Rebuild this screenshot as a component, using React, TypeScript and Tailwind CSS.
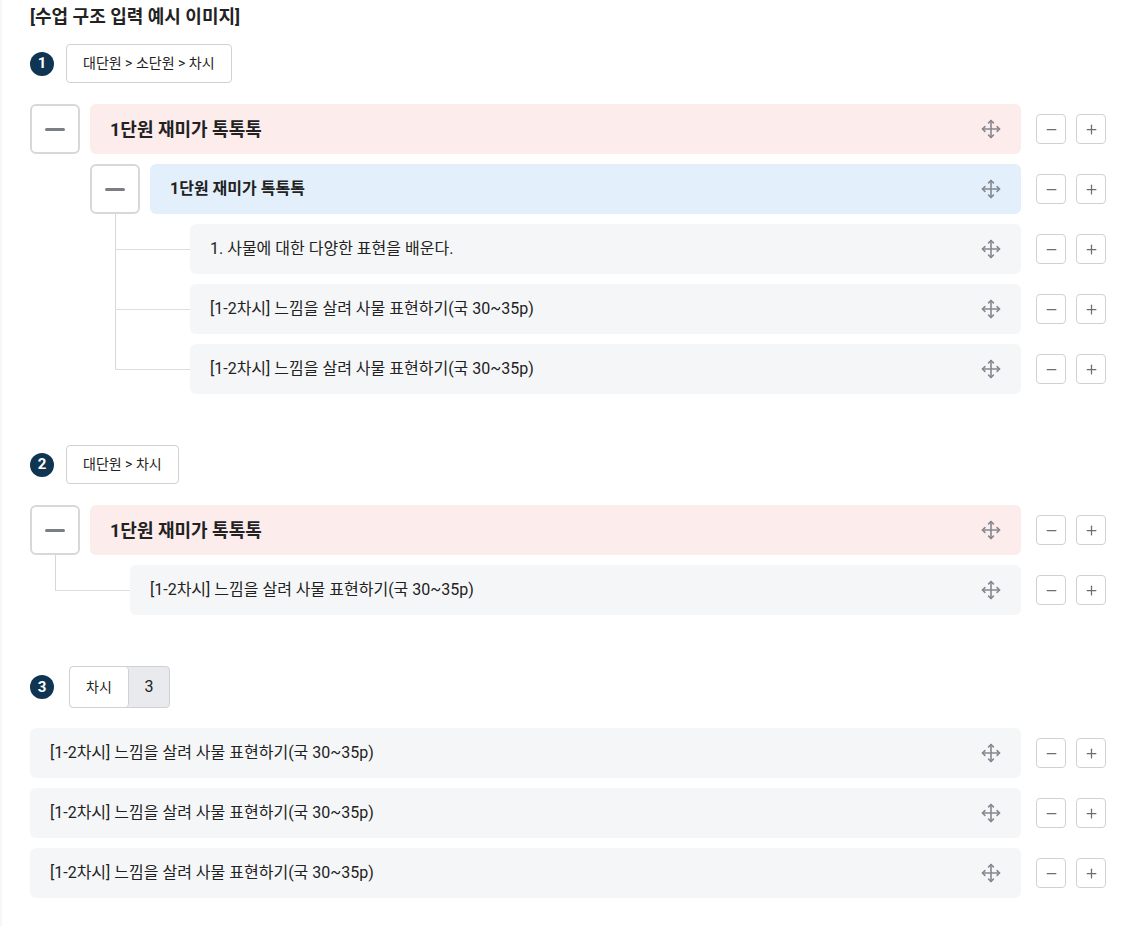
import { Minus, Plus } from 'lucide-react';
import type { ReactNode } from 'react';

type Tone = 'unit' | 'sub' | 'lesson';

const toneClass: Record<Tone, string> = {
  unit: 'bg-[#fdecec] text-[18px] font-bold pl-5',
  sub: 'bg-[#e3f0fb] text-[16px] font-bold pl-5',
  lesson: 'bg-[#f5f6f8] text-[16px] pl-5',
};

function MoveIcon() {
  return (
    <svg width="22" height="22" viewBox="0 0 22 22" fill="none" stroke="#85888e" strokeWidth="1.6" strokeLinecap="round" strokeLinejoin="round">
      <line x1="11" y1="2.5" x2="11" y2="19.5" />
      <line x1="2.5" y1="11" x2="19.5" y2="11" />
      <polyline points="8.6,4.9 11,2.5 13.4,4.9" />
      <polyline points="8.6,17.1 11,19.5 13.4,17.1" />
      <polyline points="4.9,8.6 2.5,11 4.9,13.4" />
      <polyline points="17.1,8.6 19.5,11 17.1,13.4" />
    </svg>
  );
}

function Bar({ tone, text }: { tone: Tone; text: string }) {
  return (
    <div className="flex flex-1 items-center h-[50px]">
      <div className={`flex flex-1 h-full items-center justify-between rounded-md pr-[19px] text-[#222] ${toneClass[tone]}`}>
        <span>{text}</span>
        <MoveIcon />
      </div>
      <div className="flex items-center gap-[10px] ml-[15px]">
        <button className="w-[30px] h-[30px] flex items-center justify-center rounded border border-[#cfd1d5] bg-white text-[#6b6e73]">
          <Minus size={15} strokeWidth={2} />
        </button>
        <button className="w-[30px] h-[30px] flex items-center justify-center rounded border border-[#cfd1d5] bg-white text-[#6b6e73]">
          <Plus size={15} strokeWidth={2} />
        </button>
      </div>
    </div>
  );
}

function Toggle() {
  return (
    <button className="w-[50px] h-[50px] shrink-0 flex items-center justify-center rounded-md border-2 border-[#d6d8dc] bg-white">
      <span className="block w-[20px] h-[3px] rounded-full bg-[#7b7e83]" />
    </button>
  );
}

// connector cell: vertical line at x=25 running up through the gap, elbow to the bar
function Branch({ width, last }: { width: string; last?: boolean }) {
  return (
    <div className={`relative h-[50px] shrink-0 ${width}`}>
      <span className={`absolute left-[25px] top-[-10px] w-px bg-[#d4d6da] ${last ? 'h-[35px]' : 'h-[60px]'}`} />
      <span className="absolute left-[25px] right-0 top-[25px] h-px bg-[#dcdee2]" />
    </div>
  );
}

function StepHead({ n, children }: { n: number; children: ReactNode }) {
  return (
    <div className="flex items-center gap-3">
      <span className="w-6 h-6 rounded-full bg-[#0f3553] text-white text-[15px] font-bold flex items-center justify-center">
        {n}
      </span>
      {children}
    </div>
  );
}

function Crumb({ text }: { text: string }) {
  return (
    <div className="h-[39px] px-4 flex items-center rounded border border-[#cfd1d5] bg-white text-[14px] text-[#222]">
      {text}
    </div>
  );
}

const LESSON = '[1-2차시] 느낌을 살려 사물 표현하기(국 30~35p)';

export default function App() {
  return (
    <div
      className="w-[1136px] min-h-[927px] bg-white pl-[28px] pr-[30px] pt-[5px] pb-8 border-l-2 border-[#f7f7f7]"
      style={{ fontFamily: 'Roboto, "Noto Sans CJK KR", "Noto Sans", sans-serif' }}
    >
      <h1 className="text-[18px] font-bold text-[#222] leading-[24px]">[수업 구조 입력 예시 이미지]</h1>

      {/* 1 */}
      <div className="mt-[15px]">
        <StepHead n={1}>
          <Crumb text="대단원 > 소단원 > 차시" />
        </StepHead>
        <div className="mt-[21px] flex flex-col gap-[10px]">
          <div className="flex gap-[10px]">
            <Toggle />
            <Bar tone="unit" text="1단원 재미가 톡톡톡" />
          </div>
          <div className="flex gap-[10px] pl-[60px]">
            <Toggle />
            <Bar tone="sub" text="1단원 재미가 톡톡톡" />
          </div>
          <div className="flex pl-[60px]">
            <Branch width="w-[100px]" />
            <Bar tone="lesson" text="1. 사물에 대한 다양한 표현을 배운다." />
          </div>
          <div className="flex pl-[60px]">
            <Branch width="w-[100px]" />
            <Bar tone="lesson" text={LESSON} />
          </div>
          <div className="flex pl-[60px]">
            <Branch width="w-[100px]" last />
            <Bar tone="lesson" text={LESSON} />
          </div>
        </div>
      </div>

      {/* 2 */}
      <div className="mt-[51px]">
        <StepHead n={2}>
          <Crumb text="대단원 > 차시" />
        </StepHead>
        <div className="mt-[21px] flex flex-col gap-[10px]">
          <div className="flex gap-[10px]">
            <Toggle />
            <Bar tone="unit" text="1단원 재미가 톡톡톡" />
          </div>
          <div className="flex">
            <Branch width="w-[100px]" last />
            <Bar tone="lesson" text={LESSON} />
          </div>
        </div>
      </div>

      {/* 3 */}
      <div className="mt-[51px]">
        <StepHead n={3}>
          <div className="flex h-[42px] ml-[3px] rounded border border-[#cfd1d5] bg-[#e8eaed] text-[#222] overflow-hidden">
            <div className="w-[59px] flex items-center justify-center bg-white rounded border-r border-[#cfd1d5] text-[14px]">차시</div>
            <div className="w-[40px] flex items-center justify-center text-[16px]">3</div>
          </div>
        </StepHead>
        <div className="mt-[20px] flex flex-col gap-[10px]">
          <div className="flex"><Bar tone="lesson" text={LESSON} /></div>
          <div className="flex"><Bar tone="lesson" text={LESSON} /></div>
          <div className="flex"><Bar tone="lesson" text={LESSON} /></div>
        </div>
      </div>
    </div>
  );
}
